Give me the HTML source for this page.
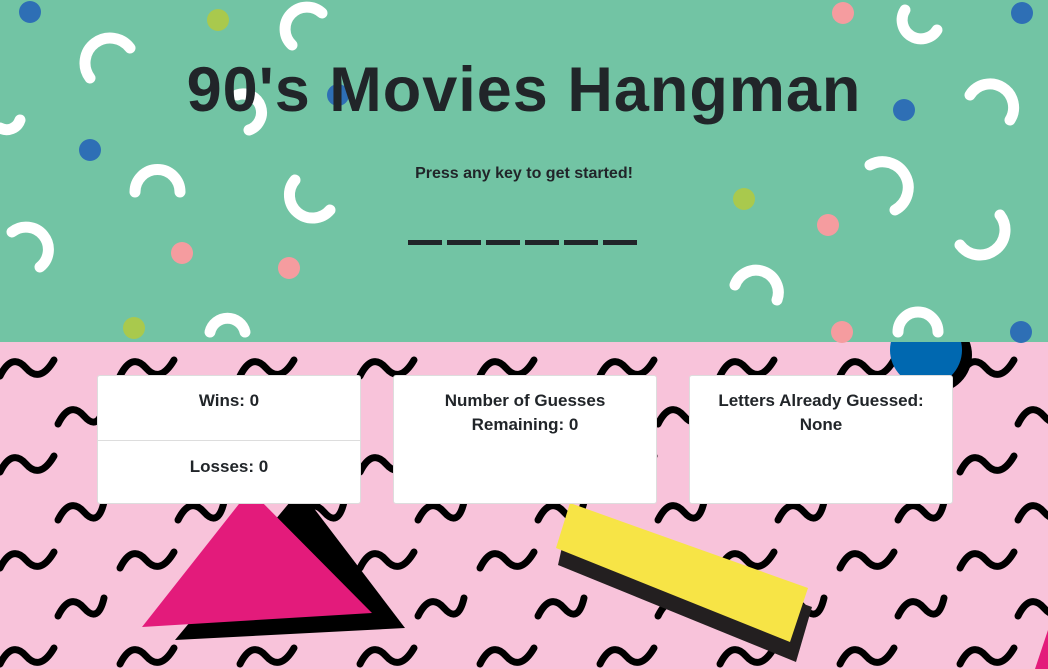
<!DOCTYPE html>
<html><head><meta charset="utf-8"><style>
body{margin:0;width:1048px;height:669px;overflow:hidden;font-family:"Liberation Sans",sans-serif;color:#212529;position:relative}
svg{position:absolute;left:0;top:0}
.t{position:absolute;left:0;width:1048px;text-align:center;font-weight:bold}
.card{position:absolute;top:375px;width:264px;height:129px;background:#fff;border:1px solid #ddd;border-radius:3px;box-sizing:border-box;text-align:center;font-weight:bold;font-size:17px;line-height:24px}
</style></head><body>
<svg width="1048" height="669">
<defs>
<pattern id="sq" width="120" height="96" patternUnits="userSpaceOnUse" patternTransform="translate(-10,340)">
<g fill="none" stroke="#000" stroke-width="7" stroke-linecap="round">
<path d="M10 36 q12 -24 26 -8 t28 -8"/>
<path d="M68 84 q12 -24 26 -8 t20 -10"/>
</g></pattern>
</defs>
<rect width="1048" height="342" fill="#72c4a4"/>
<rect y="342" width="1048" height="327" fill="#f8c3da"/>
<rect y="342" width="1048" height="327" fill="url(#sq)"/>
<g fill="none" stroke="#fff" stroke-width="11" stroke-linecap="round">
<path d="M90 78 a18 18 0 0 1 40 -30"/><path d="M292 45 a18 18 0 0 1 30 -32"/>
<path d="M0 128 a14 14 0 0 0 20 -8"/><path d="M237 95 a18 18 0 0 1 12 35"/>
<path d="M135 192 a20 20 0 0 1 45 0"/><path d="M295 180 a20 20 0 0 0 35 30"/>
<path d="M12 232 a18 18 0 0 1 28 35"/><path d="M905 10 a16 16 0 0 0 32 20"/>
<path d="M970 95 a18 18 0 0 1 40 25"/><path d="M870 165 a20 20 0 0 1 25 45"/>
<path d="M960 245 a20 20 0 0 0 40 -30"/><path d="M735 285 a20 20 0 0 1 42 15"/>
<path d="M210 332 a18 18 0 0 1 35 0"/>
</g>
<g>
<circle cx="30" cy="12" r="11" fill="#2e6fb5"/><circle cx="218" cy="20" r="11" fill="#a9c94d"/>
<circle cx="90" cy="150" r="11" fill="#2e6fb5"/><circle cx="338" cy="95" r="11" fill="#2e6fb5"/>
<circle cx="182" cy="253" r="11" fill="#f59c9f"/><circle cx="289" cy="268" r="11" fill="#f59c9f"/>
<circle cx="134" cy="328" r="11" fill="#a9c94d"/><circle cx="843" cy="13" r="11" fill="#f59c9f"/>
<circle cx="1022" cy="13" r="11" fill="#2e6fb5"/><circle cx="904" cy="110" r="11" fill="#2e6fb5"/>
<circle cx="744" cy="199" r="11" fill="#a9c94d"/><circle cx="828" cy="225" r="11" fill="#f59c9f"/>
</g>
<circle cx="934" cy="355" r="38" fill="#000"/>
<circle cx="926" cy="350" r="36" fill="#0068b0"/>
<rect x="880" y="300" width="110" height="42" fill="#72c4a4"/>
<path d="M898 332 a20 20 0 0 1 40 0" fill="none" stroke="#fff" stroke-width="11" stroke-linecap="round"/>
<circle cx="1021" cy="332" r="11" fill="#2e6fb5"/><circle cx="842" cy="332" r="11" fill="#f59c9f"/>
<polygon points="175,640 405,628 300,490" fill="#000"/>
<polygon points="142,627 372,613 250,490" fill="#e31b7b"/>
<polygon points="568,520 812,607 796,662 558,565" fill="#231f20"/>
<polygon points="570,503 808,588 790,642 556,548" fill="#f7e446"/>
<polygon points="1035,669 1048,630 1048,669" fill="#e31b7b"/>
<g fill="#212529">
<rect x="408" y="240" width="34" height="5"/><rect x="447" y="240" width="34" height="5"/><rect x="486" y="240" width="34" height="5"/>
<rect x="525" y="240" width="34" height="5"/><rect x="564" y="240" width="34" height="5"/><rect x="603" y="240" width="34" height="5"/>
</g>
</svg>
<div class="t" style="top:54px;font-size:63px;letter-spacing:1px;line-height:72px">90's Movies Hangman</div>
<div class="t" style="top:165px;font-size:16px">Press any key to get started!</div>
<div class="card" style="left:97px"><div style="padding-top:13px;height:51px;border-bottom:1px solid #ddd">Wins: 0</div><div style="padding-top:14px">Losses: 0</div></div>
<div class="card" style="left:393px;padding-top:13px">Number of Guesses<br>Remaining: 0</div>
<div class="card" style="left:689px;padding-top:13px">Letters Already Guessed:<br>None</div>
</body></html>
